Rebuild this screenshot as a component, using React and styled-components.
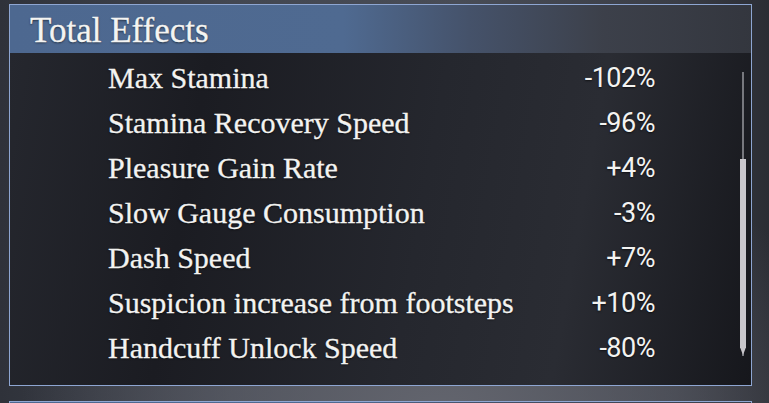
import React from "react"
import styled, { createGlobalStyle } from "styled-components"

const GlobalStyle = createGlobalStyle`
  html, body {
    margin: 0;
    padding: 0;
    height: 100%;
    overflow: hidden;
  }
  body {
    background:
      radial-gradient(ellipse 420px 300px at 440px 420px, #63656e 0%, rgba(99,101,110,0) 100%),
      linear-gradient(90deg, #2f323a 0%, #434751 30%, #484c56 60%, #3a3d46 88%, #2b2d34 100%);
    font-family: "Liberation Serif", serif;
  }
`

const Page = styled.div`
  display: flex;
  flex-direction: column;
  gap: 15px;
  padding: 4px 17px 0 9px;
`

const Panel = styled.section`
  border: 1px solid #8ea6d2;
`

const Header = styled.header`
  height: 48px;
  display: flex;
  align-items: center;
  padding: 4px 0 0 20px;
  box-sizing: border-box;
  background: linear-gradient(90deg, #4d6890 0%, #4f6a91 45%, #45526a 62%, rgba(60,64,74,0.9) 80%, rgba(52,55,63,0.9) 100%);
`

const Title = styled.h2`
  margin: 0;
  font-family: "Liberation Serif", serif;
  font-weight: normal;
  font-size: 35px;
  color: #f4f4f2;
  -webkit-text-stroke: 0.3px #f4f4f2;
  text-shadow: 0 1px 2px rgba(0,0,0,0.6);
`

const Body = styled.div`
  position: relative;
  padding: 2px 0 15px;
  background: linear-gradient(100deg, #25272e 0%, #1b1c22 25%, #25272e 55%, #2a2c33 75%, #16171c 100%);
`

const Row = styled.div`
  height: 45px;
  display: grid;
  grid-template-columns: 98px 1fr auto 96px;
  align-items: center;
`

const Label = styled.span`
  grid-column: 2;
  font-family: "Liberation Serif", serif;
  font-size: 30px;
  color: #f3f3f1;
  -webkit-text-stroke: 0.3px #f3f3f1;
  text-shadow: 0 1px 2px rgba(0,0,0,0.6);
`

const Value = styled.span`
  grid-column: 3;
  font-family: Roboto, "Noto Sans", sans-serif;
  font-size: 27px;
  color: #f3f3f1;
  letter-spacing: -0.5px;
  text-shadow: 0 1px 2px rgba(0,0,0,0.6);
`

const Track = styled.div`
  position: absolute;
  right: 7px;
  top: 19px;
  width: 2px;
  height: 284px;
  background: #77787e;
`

const Thumb = styled.div`
  position: absolute;
  right: 5px;
  top: 106px;
  width: 6px;
  height: 196px;
  background: #c9c7cc;
  clip-path: polygon(0 0, 100% 0, 100% 96%, 50% 100%, 0 96%);
`

const NextPanel = styled.section`
  border: 1px solid #8ea6d2;
  height: 40px;
  background: linear-gradient(90deg, #4d6890 0%, #4f6a91 45%, #45526a 62%, #3a3e48 100%);
`

const effects = [
  ["Max Stamina", "-102%"],
  ["Stamina Recovery Speed", "-96%"],
  ["Pleasure Gain Rate", "+4%"],
  ["Slow Gauge Consumption", "-3%"],
  ["Dash Speed", "+7%"],
  ["Suspicion increase from footsteps", "+10%"],
  ["Handcuff Unlock Speed", "-80%"],
]

export default function App() {
  return (
    <>
      <GlobalStyle />
      <Page>
        <Panel>
          <Header>
            <Title>Total Effects</Title>
          </Header>
          <Body>
            {effects.map(([name, value]) => (
              <Row key={name}>
                <Label>{name}</Label>
                <Value>{value}</Value>
              </Row>
            ))}
            <Track />
            <Thumb />
          </Body>
        </Panel>
        <NextPanel />
      </Page>
    </>
  )
}
